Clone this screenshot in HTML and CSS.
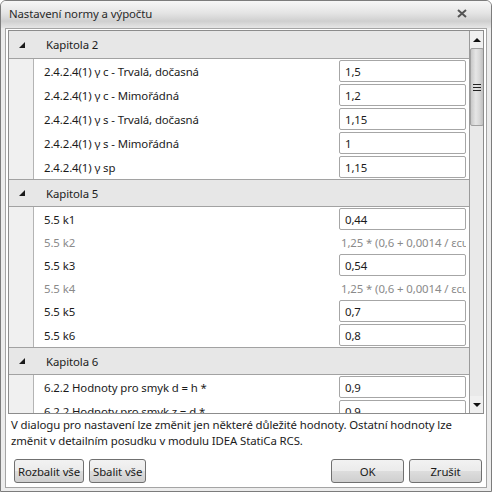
FILE: index.html
```html
<!DOCTYPE html>
<html lang="cs">
<head>
<meta charset="utf-8">
<title>Nastavení normy a výpočtu</title>
<link rel="stylesheet" href="styles.css">
</head>
<body>
<div class="window">
  <div class="titlebar">
    <span class="title">Nastavení normy a výpočtu</span>
    <svg class="close" width="10" height="9" viewBox="0 0 10 9"><path d="M1 1 L9 8 M9 1 L1 8" stroke="#555" stroke-width="2"/></svg>
  </div>
  <div class="client">
    <div class="gridwrap">
      <div class="grid">
        <div class="group">
          <div class="ghead"><span class="tri"></span><span>Kapitola 2</span></div>
          <div class="row"><span class="band"></span><span class="label">2.4.2.4(1) γ c - Trvalá, dočasná</span><span class="value"><span class="box">1,5</span></span></div>
          <div class="row"><span class="band"></span><span class="label">2.4.2.4(1) γ c - Mimořádná</span><span class="value"><span class="box">1,2</span></span></div>
          <div class="row"><span class="band"></span><span class="label">2.4.2.4(1) γ s - Trvalá, dočasná</span><span class="value"><span class="box">1,15</span></span></div>
          <div class="row"><span class="band"></span><span class="label">2.4.2.4(1) γ s - Mimořádná</span><span class="value"><span class="box">1</span></span></div>
          <div class="row"><span class="band"></span><span class="label">2.4.2.4(1) γ sp</span><span class="value"><span class="box">1,15</span></span></div>
        </div>
        <div class="group">
          <div class="ghead"><span class="tri"></span><span>Kapitola 5</span></div>
          <div class="row"><span class="band"></span><span class="label">5.5 k1</span><span class="value"><span class="box">0,44</span></span></div>
          <div class="row ro"><span class="band"></span><span class="label">5.5 k2</span><span class="value"><span class="formula">1,25 * (0,6 + 0,0014 / εcu2)</span></span></div>
          <div class="row"><span class="band"></span><span class="label">5.5 k3</span><span class="value"><span class="box">0,54</span></span></div>
          <div class="row ro"><span class="band"></span><span class="label">5.5 k4</span><span class="value"><span class="formula">1,25 * (0,6 + 0,0014 / εcu2)</span></span></div>
          <div class="row"><span class="band"></span><span class="label">5.5 k5</span><span class="value"><span class="box">0,7</span></span></div>
          <div class="row"><span class="band"></span><span class="label">5.5 k6</span><span class="value"><span class="box">0,8</span></span></div>
        </div>
        <div class="group">
          <div class="ghead"><span class="tri"></span><span>Kapitola 6</span></div>
          <div class="row"><span class="band"></span><span class="label">6.2.2 Hodnoty pro smyk d = h *</span><span class="value"><span class="box">0,9</span></span></div>
          <div class="row"><span class="band"></span><span class="label">6.2.2 Hodnoty pro smyk z = d *</span><span class="value"><span class="box">0,9</span></span></div>
        </div>
      </div>
      <div class="scrollbar">
        <div class="sb-btn"><span class="arr-up"></span></div>
        <div class="sb-thumb"><span class="grip"></span></div>
        <div class="sb-track"></div>
        <div class="sb-btn"><span class="arr-down"></span></div>
      </div>
    </div>
    <p class="note">V dialogu pro nastavení lze změnit jen některé důležité hodnoty. Ostatní hodnoty lze změnit v detailním posudku v modulu IDEA StatiCa RCS.</p>
    <div class="buttons">
      <div class="left">
        <button class="btn">Rozbalit vše</button>
        <button class="btn">Sbalit vše</button>
      </div>
      <div class="right">
        <button class="btn wide">OK</button>
        <button class="btn wide">Zrušit</button>
      </div>
    </div>
  </div>
</div>
</body>
</html>
```
FILE: styles.css
```css
html, body {
  margin: 0;
  padding: 0;
  background: #ffffff;
}
body {
  font-family: "Noto Sans", "Open Sans", sans-serif;
  font-size: 11.4px;
  letter-spacing: -0.1px;
  color: #1b1b1b;
}
.window {
  box-sizing: border-box;
  width: 492px;
  height: 492px;
  border: 1px solid #7c7c7c;
  border-radius: 6px 6px 0 0;
  background: #ececec;
  display: flex;
  flex-direction: column;
  overflow: hidden;
}
.titlebar {
  height: 27px;
  flex: none;
  display: flex;
  align-items: center;
  justify-content: space-between;
  padding: 0 24px 2px 8px;
  background: linear-gradient(#f7f7f7 0%, #e4e4e4 45%, #cfcfcf 75%, #e6e6e6 100%);
  box-sizing: border-box;
}
.title {
  color: #2a2a2a;
}
.close {
  display: block;
}
.client {
  flex: 1;
  margin: 0 4px 3px 4px;
  border: 1px solid #a4a4a4;
  background: #ffffff;
  display: flex;
  flex-direction: column;
  padding: 1px 2px 0 2px;
  min-height: 0;
}
.gridwrap {
  height: 382px;
  flex: none;
  border: 1px solid #8c8c8c;
  display: flex;
  overflow: hidden;
}
.grid {
  width: 460px;
  flex: none;
  overflow: hidden;
  border-right: 1px solid #9a9a9a;
}
.ghead {
  height: 26px;
  background: #e7e7e7;
  border-top: 1px solid #a2a2a2;
  border-bottom: 1px solid #a2a2a2;
  display: flex;
  align-items: center;
  gap: 21px;
  padding-left: 10px;
}
.group:first-child .ghead {
  border-top: none;
  height: 27px;
}
.tri {
  width: 0;
  height: 0;
  border-left: 6px solid transparent;
  border-bottom: 6px solid #1a1a1a;
}
.row {
  height: 24px;
  display: flex;
  align-items: stretch;
}
.row.ro {
  height: 22px;
}
.ro .label {
  color: #8a8a8a;
}
.band {
  width: 24px;
  flex: none;
  background: #f0f0f0;
  border-right: 1px solid #b4b4b4;
}
.label {
  flex: 1;
  padding-left: 10px;
  display: flex;
  align-items: center;
  white-space: nowrap;
}
.value {
  width: 127px;
  flex: none;
  margin-right: 3px;
  display: flex;
  align-items: center;
  overflow: hidden;
}
.box {
  box-sizing: border-box;
  width: 127px;
  height: 22px;
  border: 1px solid #a6a6a6;
  border-radius: 2px;
  padding-left: 5px;
  display: flex;
  align-items: center;
}
.formula {
  color: #8a8a8a;
  white-space: nowrap;
  padding-left: 2px;
}
.scrollbar {
  width: 14px;
  flex: none;
  background: #e9e9e9;
  display: flex;
  flex-direction: column;
}
.sb-btn {
  height: 17px;
  flex: none;
  display: flex;
  align-items: center;
  justify-content: center;
  background: #f0f0f0;
}
.arr-up {
  width: 0;
  height: 0;
  border-left: 4px solid transparent;
  border-right: 4px solid transparent;
  border-bottom: 4px solid #111;
}
.arr-down {
  width: 0;
  height: 0;
  border-left: 4px solid transparent;
  border-right: 4px solid transparent;
  border-top: 4px solid #111;
}
.sb-thumb {
  height: 78px;
  flex: none;
  box-sizing: border-box;
  border: 1px solid #a0a0a0;
  border-radius: 2px;
  background: linear-gradient(90deg, #c8c8c8, #e6e6e6 40%, #d8d8d8 70%, #c0c0c0);
  display: flex;
  align-items: center;
  justify-content: center;
}
.grip {
  width: 8px;
  height: 5px;
  border-top: 1px solid #222;
  border-bottom: 1px solid #222;
  background: linear-gradient(transparent 2px, #222 2px, #222 3px, transparent 3px);
}
.sb-track {
  flex: 1;
}
.note {
  margin: 3px 0 0 3px;
  line-height: 16px;
}
.buttons {
  margin-top: auto;
  margin-bottom: 4px;
  display: flex;
  justify-content: space-between;
  padding: 0 2px 0 6px;
}
.left, .right {
  display: flex;
  gap: 5px;
}
.btn {
  font-family: inherit;
  font-size: 11.4px;
  letter-spacing: -0.1px;
  color: #1b1b1b;
  height: 24px;
  padding: 0 3px;
  border: 1px solid #707070;
  border-radius: 3px;
  background: linear-gradient(#f2f2f2 0%, #ebebeb 50%, #dddddd 50%, #cfcfcf 100%);
}
.btn.wide {
  width: 73px;
}
```
